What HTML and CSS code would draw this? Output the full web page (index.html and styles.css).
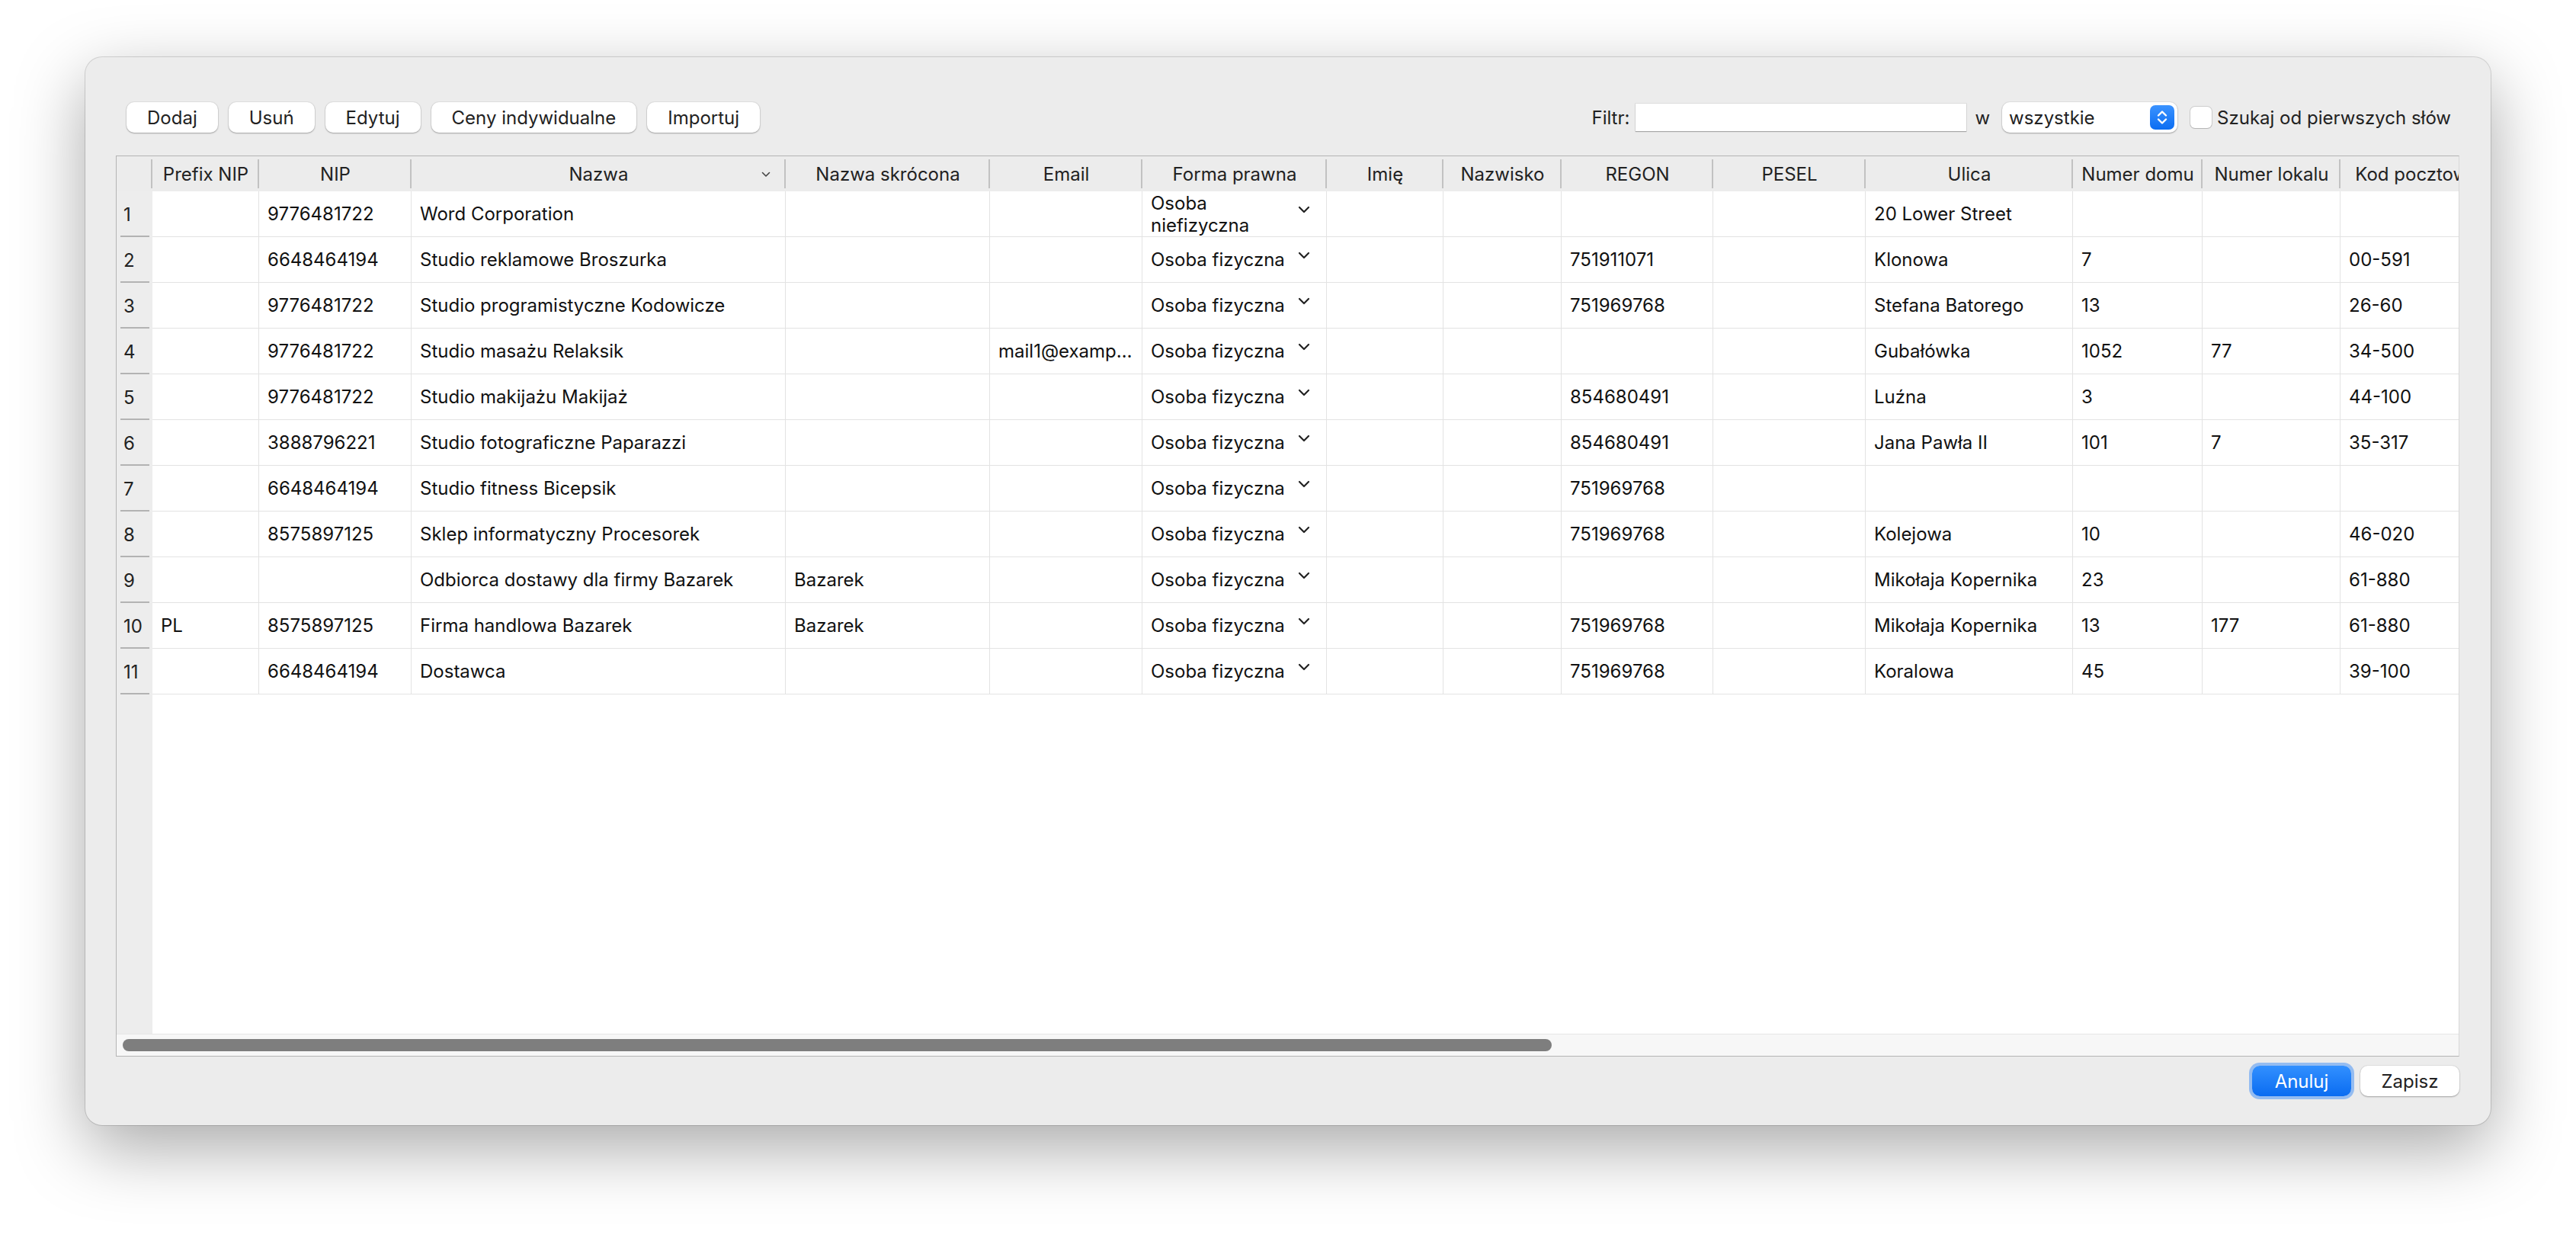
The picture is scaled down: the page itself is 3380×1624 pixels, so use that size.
FILE: index.html
```html
<!DOCTYPE html>
<html lang="pl">
  <head>
    <meta charset="UTF-8" />
    <title>Kontrahenci</title>
    <link rel="stylesheet" href="styles.css">
  </head>
  <body>
    <div class="window">
      <div class="toolbar">
        <button class="btn">Dodaj</button>
        <button class="btn">Usuń</button>
        <button class="btn">Edytuj</button>
        <button class="btn">Ceny indywidualne</button>
        <button class="btn">Importuj</button>

        <div class="filter">
          <span class="filter-label">Filtr:</span>
          <div class="filter-input"></div>
          <span class="filter-in">w</span>
          <div class="select">
            <span>wszystkie</span>
            <span class="stepper">
              <svg viewBox="0 0 32 32" width="32" height="32">
                <path d="M11 13.5l5-5 5 5M11 18.5l5 5 5-5" fill="none" stroke="#fff" stroke-width="2.4" stroke-linecap="round" stroke-linejoin="round"/>
              </svg>
            </span>
          </div>
          <span class="checkbox"></span>
          <span class="check-label">Szukaj od pierwszych słów</span>
        </div>
      </div>

      <div class="grid">
        <div class="grid-scroll">
          <div class="row head">
            <div class="th"></div>
            <div class="th">Prefix NIP</div>
            <div class="th">NIP</div>
            <div class="th sorted">Nazwa
              <svg class="sort" viewBox="0 0 12 8" width="12" height="8"><path d="M1.5 1.5l4.5 4.5 4.5-4.5" fill="none" stroke="#444" stroke-width="1.6" stroke-linecap="round" stroke-linejoin="round"/></svg>
            </div>
            <div class="th">Nazwa skrócona</div>
            <div class="th">Email</div>
            <div class="th">Forma prawna</div>
            <div class="th">Imię</div>
            <div class="th">Nazwisko</div>
            <div class="th">REGON</div>
            <div class="th">PESEL</div>
            <div class="th">Ulica</div>
            <div class="th">Numer domu</div>
            <div class="th">Numer lokalu</div>
            <div class="th">Kod pocztowy</div>
          </div>

          <div class="row">
            <div class="num">1</div><div class="td"></div><div class="td">9776481722</div><div class="td">Word Corporation</div><div class="td"></div><div class="td"></div>
            <div class="td combo"><span class="two-line">Osoba<br>niefizyczna</span><svg class="chev" viewBox="0 0 16 10" width="16" height="10"><path d="M2 2l6 6 6-6" fill="none" stroke="#222" stroke-width="2.2" stroke-linecap="round" stroke-linejoin="round"/></svg></div>
            <div class="td"></div><div class="td"></div><div class="td"></div><div class="td"></div><div class="td">20 Lower Street</div><div class="td"></div><div class="td"></div><div class="td"></div>
          </div>
          <div class="row">
            <div class="num">2</div><div class="td"></div><div class="td">6648464194</div><div class="td">Studio reklamowe Broszurka</div><div class="td"></div><div class="td"></div>
            <div class="td combo"><span>Osoba fizyczna</span><svg class="chev" viewBox="0 0 16 10" width="16" height="10"><path d="M2 2l6 6 6-6" fill="none" stroke="#222" stroke-width="2.2" stroke-linecap="round" stroke-linejoin="round"/></svg></div>
            <div class="td"></div><div class="td"></div><div class="td">751911071</div><div class="td"></div><div class="td">Klonowa</div><div class="td">7</div><div class="td"></div><div class="td">00-591</div>
          </div>
          <div class="row">
            <div class="num">3</div><div class="td"></div><div class="td">9776481722</div><div class="td">Studio programistyczne Kodowicze</div><div class="td"></div><div class="td"></div>
            <div class="td combo"><span>Osoba fizyczna</span><svg class="chev" viewBox="0 0 16 10" width="16" height="10"><path d="M2 2l6 6 6-6" fill="none" stroke="#222" stroke-width="2.2" stroke-linecap="round" stroke-linejoin="round"/></svg></div>
            <div class="td"></div><div class="td"></div><div class="td">751969768</div><div class="td"></div><div class="td">Stefana Batorego</div><div class="td">13</div><div class="td"></div><div class="td">26-60</div>
          </div>
          <div class="row">
            <div class="num">4</div><div class="td"></div><div class="td">9776481722</div><div class="td">Studio masażu Relaksik</div><div class="td"></div><div class="td">mail1@examp…</div>
            <div class="td combo"><span>Osoba fizyczna</span><svg class="chev" viewBox="0 0 16 10" width="16" height="10"><path d="M2 2l6 6 6-6" fill="none" stroke="#222" stroke-width="2.2" stroke-linecap="round" stroke-linejoin="round"/></svg></div>
            <div class="td"></div><div class="td"></div><div class="td"></div><div class="td"></div><div class="td">Gubałówka</div><div class="td">1052</div><div class="td">77</div><div class="td">34-500</div>
          </div>
          <div class="row">
            <div class="num">5</div><div class="td"></div><div class="td">9776481722</div><div class="td">Studio makijażu Makijaż</div><div class="td"></div><div class="td"></div>
            <div class="td combo"><span>Osoba fizyczna</span><svg class="chev" viewBox="0 0 16 10" width="16" height="10"><path d="M2 2l6 6 6-6" fill="none" stroke="#222" stroke-width="2.2" stroke-linecap="round" stroke-linejoin="round"/></svg></div>
            <div class="td"></div><div class="td"></div><div class="td">854680491</div><div class="td"></div><div class="td">Luźna</div><div class="td">3</div><div class="td"></div><div class="td">44-100</div>
          </div>
          <div class="row">
            <div class="num">6</div><div class="td"></div><div class="td">3888796221</div><div class="td">Studio fotograficzne Paparazzi</div><div class="td"></div><div class="td"></div>
            <div class="td combo"><span>Osoba fizyczna</span><svg class="chev" viewBox="0 0 16 10" width="16" height="10"><path d="M2 2l6 6 6-6" fill="none" stroke="#222" stroke-width="2.2" stroke-linecap="round" stroke-linejoin="round"/></svg></div>
            <div class="td"></div><div class="td"></div><div class="td">854680491</div><div class="td"></div><div class="td">Jana Pawła II</div><div class="td">101</div><div class="td">7</div><div class="td">35-317</div>
          </div>
          <div class="row">
            <div class="num">7</div><div class="td"></div><div class="td">6648464194</div><div class="td">Studio fitness Bicepsik</div><div class="td"></div><div class="td"></div>
            <div class="td combo"><span>Osoba fizyczna</span><svg class="chev" viewBox="0 0 16 10" width="16" height="10"><path d="M2 2l6 6 6-6" fill="none" stroke="#222" stroke-width="2.2" stroke-linecap="round" stroke-linejoin="round"/></svg></div>
            <div class="td"></div><div class="td"></div><div class="td">751969768</div><div class="td"></div><div class="td"></div><div class="td"></div><div class="td"></div><div class="td"></div>
          </div>
          <div class="row">
            <div class="num">8</div><div class="td"></div><div class="td">8575897125</div><div class="td">Sklep informatyczny Procesorek</div><div class="td"></div><div class="td"></div>
            <div class="td combo"><span>Osoba fizyczna</span><svg class="chev" viewBox="0 0 16 10" width="16" height="10"><path d="M2 2l6 6 6-6" fill="none" stroke="#222" stroke-width="2.2" stroke-linecap="round" stroke-linejoin="round"/></svg></div>
            <div class="td"></div><div class="td"></div><div class="td">751969768</div><div class="td"></div><div class="td">Kolejowa</div><div class="td">10</div><div class="td"></div><div class="td">46-020</div>
          </div>
          <div class="row">
            <div class="num">9</div><div class="td"></div><div class="td"></div><div class="td">Odbiorca dostawy dla firmy Bazarek</div><div class="td">Bazarek</div><div class="td"></div>
            <div class="td combo"><span>Osoba fizyczna</span><svg class="chev" viewBox="0 0 16 10" width="16" height="10"><path d="M2 2l6 6 6-6" fill="none" stroke="#222" stroke-width="2.2" stroke-linecap="round" stroke-linejoin="round"/></svg></div>
            <div class="td"></div><div class="td"></div><div class="td"></div><div class="td"></div><div class="td">Mikołaja Kopernika</div><div class="td">23</div><div class="td"></div><div class="td">61-880</div>
          </div>
          <div class="row">
            <div class="num">10</div><div class="td">PL</div><div class="td">8575897125</div><div class="td">Firma handlowa Bazarek</div><div class="td">Bazarek</div><div class="td"></div>
            <div class="td combo"><span>Osoba fizyczna</span><svg class="chev" viewBox="0 0 16 10" width="16" height="10"><path d="M2 2l6 6 6-6" fill="none" stroke="#222" stroke-width="2.2" stroke-linecap="round" stroke-linejoin="round"/></svg></div>
            <div class="td"></div><div class="td"></div><div class="td">751969768</div><div class="td"></div><div class="td">Mikołaja Kopernika</div><div class="td">13</div><div class="td">177</div><div class="td">61-880</div>
          </div>
          <div class="row">
            <div class="num">11</div><div class="td"></div><div class="td">6648464194</div><div class="td">Dostawca</div><div class="td"></div><div class="td"></div>
            <div class="td combo"><span>Osoba fizyczna</span><svg class="chev" viewBox="0 0 16 10" width="16" height="10"><path d="M2 2l6 6 6-6" fill="none" stroke="#222" stroke-width="2.2" stroke-linecap="round" stroke-linejoin="round"/></svg></div>
            <div class="td"></div><div class="td"></div><div class="td">751969768</div><div class="td"></div><div class="td">Koralowa</div><div class="td">45</div><div class="td"></div><div class="td">39-100</div>
          </div>
        </div>
        <div class="hscroll">
          <div class="hscroll-thumb"></div>
        </div>
      </div>

      <div class="actions">
        <button class="btn primary">Anuluj</button>
        <button class="btn">Zapisz</button>
      </div>
    </div>
  </body>
</html>
```

FILE: styles.css
```css
body {
  margin: 0;
  background: #fff;
  font-family: Inter, "Noto Sans", sans-serif;
  color: #1d1d1d;
}
.window {
  width: 3156px;
  margin: 75px 0 148px 112px;
  padding: 59px 41px 38px 40px;
  box-sizing: border-box;
  background: #ececec;
  border-radius: 22px;
  box-shadow: 0 0 0 1px rgba(0,0,0,0.14), 0 30px 90px rgba(0,0,0,0.34);
}

/* toolbar */
.toolbar {
  display: flex;
  align-items: center;
  gap: 14px;
  height: 40px;
  margin-left: 14px;
}
.btn {
  height: 40px;
  padding: 0 27px;
  border: none;
  border-radius: 10px;
  background: #fff;
  box-shadow: 0 0 0 1px rgba(0,0,0,0.05), 0 1px 2px rgba(0,0,0,0.28);
  font-family: Inter, "Noto Sans", sans-serif;
  font-size: 24px;
  color: #222;
}
.filter {
  margin-left: auto;
  display: flex;
  align-items: center;
  font-size: 24px;
  color: #222;
}
.filter-label {
  margin-right: 8px;
}
.filter-input {
  width: 434px;
  height: 36px;
  background: #fff;
  box-shadow: 0 0 0 1px rgba(0,0,0,0.06), 0 1px 1px rgba(0,0,0,0.25);
}
.filter-in {
  margin: 0 16px 0 11px;
}
.select {
  width: 230px;
  height: 40px;
  box-sizing: border-box;
  padding: 0 4px 0 9px;
  display: flex;
  align-items: center;
  justify-content: space-between;
  background: #fff;
  border-radius: 10px;
  box-shadow: 0 0 0 1px rgba(0,0,0,0.05), 0 1px 2px rgba(0,0,0,0.28);
}
.stepper {
  width: 32px;
  height: 32px;
  border-radius: 7px;
  background: linear-gradient(#3b93ff, #0b6df2);
  display: flex;
}
.checkbox {
  width: 28px;
  height: 28px;
  margin: 0 7px 0 17px;
  box-sizing: border-box;
  border-radius: 6px;
  background: #fff;
  box-shadow: 0 0 0 1px rgba(0,0,0,0.13), 0 1px 1px rgba(0,0,0,0.12);
}
.check-label {
  margin-right: 11px;
}

/* data grid */
.grid {
  --cols: 47px 140px 200px 491px 268px 200px 242px 153px 155px 199px 200px 272px 170px 181px 200px;
  margin-top: 30px;
  height: 1182px;
  box-sizing: border-box;
  border: 1px solid #b4b4b4;
  border-right-color: #d8d8d8;
  background: #fff;
  display: flex;
  flex-direction: column;
}
.grid-scroll {
  flex: 1;
  overflow: hidden;
  background: linear-gradient(to right, #ededed 47px, #fff 47px);
}
.row {
  display: grid;
  grid-template-columns: var(--cols);
  width: max-content;
  height: 60px;
  font-size: 24px;
}
.row.head {
  height: 46px;
  background: #ececec;
}
.th {
  position: relative;
  display: flex;
  align-items: center;
  justify-content: center;
  white-space: nowrap;
  overflow: hidden;
  color: #222;
}
.th::after {
  content: "";
  position: absolute;
  right: 0;
  top: 4px;
  bottom: 4px;
  width: 2px;
  background: #c2c2c2;
}
.th .sort {
  position: absolute;
  right: 20px;
  top: 20px;
}
.num {
  display: flex;
  align-items: center;
  padding-left: 9px;
  color: #222;
  background: linear-gradient(#b3b3b3, #b3b3b3) no-repeat 5px 100% / 38px 2px;
}
.td {
  display: flex;
  align-items: center;
  padding: 0 11px;
  border-right: 1px solid #e3e3e3;
  border-bottom: 1px solid #e3e3e3;
  background: #fff;
  white-space: nowrap;
  overflow: hidden;
  color: #111;
  min-width: 0;
}
.combo {
  justify-content: space-between;
  padding-right: 21px;
}
.combo .chev {
  flex: none;
  margin-bottom: 12px;
}
.two-line {
  white-space: normal;
  line-height: 29px;
}
.hscroll {
  height: 28px;
  display: flex;
  align-items: center;
  padding: 0 8px;
  background: #f7f7f7;
  border-top: 1px solid #e6e6e6;
}
.hscroll-thumb {
  width: 1875px;
  height: 16px;
  border-radius: 8px;
  background: #7e7e7e;
}

/* bottom buttons */
.actions {
  display: flex;
  justify-content: flex-end;
  gap: 12px;
  margin-top: 12px;
}
.actions .btn {
  width: 130px;
  padding: 0;
}
.btn.primary {
  color: #fff;
  background: linear-gradient(#3290ff, #0a6cf1);
  box-shadow: 0 0 0 4px rgba(60,140,245,0.5);
}
```
